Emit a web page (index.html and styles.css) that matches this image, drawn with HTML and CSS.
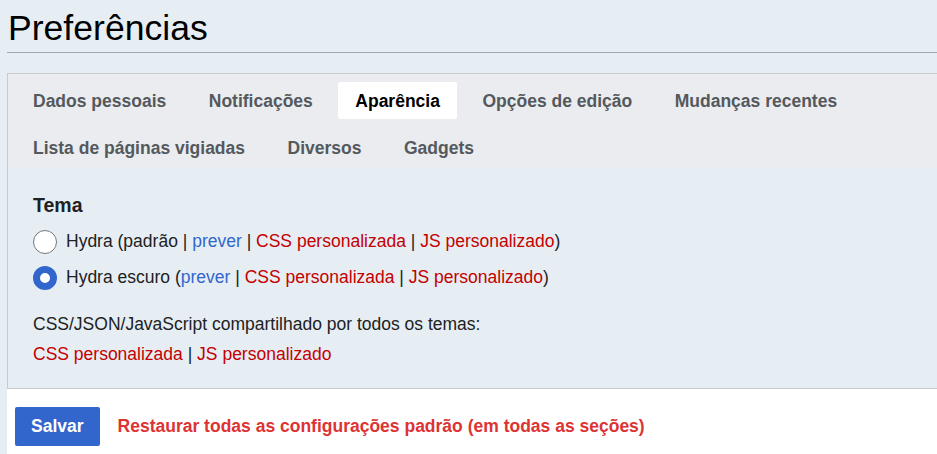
FILE: index.html
```html
<!DOCTYPE html>
<html lang="pt">
<head>
<meta charset="utf-8">
<title>Preferências</title>
<link rel="stylesheet" href="styles.css">
</head>
<body>
<h1 class="title">Preferências</h1>
<div class="panel">
  <div class="tabs">
    <span class="tab">Dados pessoais</span>
    <span class="tab">Notificações</span>
    <span class="tab tab-active">Aparência</span>
    <span class="tab">Opções de edição</span>
    <span class="tab">Mudanças recentes</span>
    <span class="tab">Lista de páginas vigiadas</span>
    <span class="tab">Diversos</span>
    <span class="tab">Gadgets</span>
  </div>
  <div class="content">
    <h2 class="section-title">Tema</h2>
    <label class="radio-row">
      <span class="radio"></span>
      <span class="radio-label">Hydra (padrão <span class="sep">|</span> <a class="link">prever</a> <span class="sep">|</span> <a class="link-new">CSS personalizada</a> <span class="sep">|</span> <a class="link-new">JS personalizado</a>)</span>
    </label>
    <label class="radio-row">
      <span class="radio radio-checked"></span>
      <span class="radio-label">Hydra escuro (<a class="link">prever</a> <span class="sep">|</span> <a class="link-new">CSS personalizada</a> <span class="sep">|</span> <a class="link-new">JS personalizado</a>)</span>
    </label>
    <p class="shared">CSS/JSON/JavaScript compartilhado por todos os temas:</p>
    <p class="shared"><a class="link-new">CSS personalizada</a> <span class="sep">|</span> <a class="link-new">JS personalizado</a></p>
  </div>
  <div class="footer">
    <button class="btn-save">Salvar</button>
    <a class="restore">Restaurar todas as configurações padrão (em todas as seções)</a>
  </div>
</div>
</body>
</html>
```

FILE: styles.css
```css
html, body {
  margin: 0;
  padding: 0;
}
body {
  background: #e6eef4;
  font-family: "Liberation Sans", Arial, sans-serif;
  color: #202122;
  height: 454px;
  overflow: hidden;
}
.title {
  margin: 8px 0 0 7px;
  padding: 0 0 3px 1px;
  font-size: 35.6px;
  font-weight: normal;
  line-height: 41px;
  color: #000;
  border-bottom: 1px solid #a2a9b1;
}
.panel {
  margin: 20px 0 0 7px;
  display: flex;
  flex-direction: column;
  height: 381px;
}
.tabs {
  background: #eaecf0;
  border: 1px solid #c8ccd1;
  border-right: 0;
  border-bottom: 0;
  padding: 8px 8px 2px 8px;
  display: flex;
  flex-wrap: wrap;
  column-gap: 8.5px;
  row-gap: 10px;
}
.tab {
  font-size: 17.5px;
  font-weight: bold;
  line-height: 21px;
  padding: 9px 17px 7px;
  color: #54595d;
}
.tab-active {
  background: #fff;
  color: #000;
  border-radius: 2px;
}
.content {
  border-left: 1px solid #c8ccd1;
  border-bottom: 1px solid #c8ccd1;
  padding: 25px 25px 19px 25px;
  font-size: 17.5px;
}
.section-title {
  margin: 0 0 6.5px;
  font-size: 19.5px;
  line-height: 24px;
  font-weight: bold;
  color: #202122;
}
.radio-row {
  display: flex;
  align-items: center;
  height: 36px;
  gap: 9px;
}
.radio {
  width: 24px;
  height: 24px;
  box-sizing: border-box;
  border-radius: 50%;
  border: 1px solid #72777d;
  background: #fff;
  flex: none;
}
.radio-checked {
  border: 7.5px solid #3366cc;
}
.radio-label {
  line-height: 21px;
}
.link {
  color: #3366cc;
}
.link-new {
  color: #c40000;
}
.sep {
  color: #202122;
}
.shared {
  margin: 0;
  line-height: 30px;
}
.content .radio-row + .shared {
  margin-top: 13px;
}
.footer {
  flex: 1;
  background: #fff;
  padding: 18px 8px 0;
  display: flex;
  align-items: flex-start;
  gap: 18px;
}
.btn-save {
  height: 39px;
  padding: 0 16px;
  border: 0;
  border-radius: 2px;
  background: #3366cc;
  color: #fff;
  font-family: "Liberation Sans", Arial, sans-serif;
  font-size: 17.5px;
  font-weight: bold;
  line-height: 39px;
}
.restore {
  line-height: 39px;
  font-size: 17.5px;
  font-weight: bold;
  color: #dd3333;
}
```
